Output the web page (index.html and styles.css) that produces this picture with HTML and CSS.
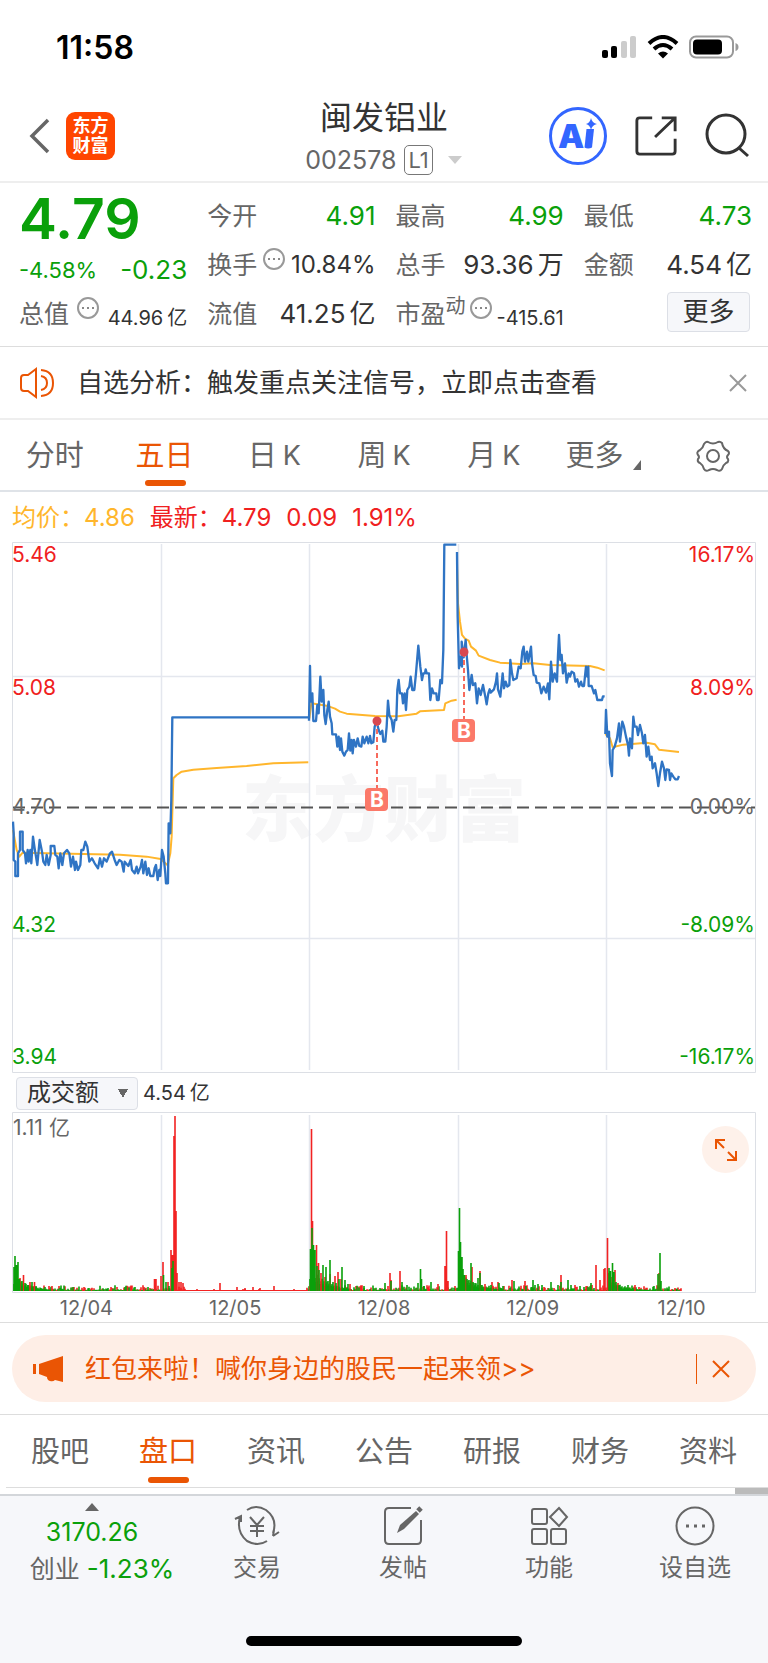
FILE: index.html
```html
<!DOCTYPE html>
<html lang="zh-CN">
<head>
<meta charset="utf-8">
<meta name="viewport" content="width=device-width, initial-scale=1">
<title>闽发铝业 002578</title>
<link rel="stylesheet" href="styles.css">
</head>
<body>
<div class="status">
  <span class="clock">11:58</span>
  <svg class="status-icons" width="138" height="26" viewBox="0 0 138 26" aria-hidden="true">
    <g fill="#000"><rect x="1" y="15" width="6" height="8" rx="2"/><rect x="10" y="11" width="6" height="12" rx="2"/></g>
    <g fill="#ccc"><rect x="20" y="6" width="6" height="17" rx="2"/><rect x="29" y="1" width="6" height="22" rx="2"/></g>
    <g fill="none" stroke="#000" stroke-width="4"><path d="M48 8.500Q62 -4.500 76 8.500"/><path d="M53 14Q62 6 71 14"/></g>
    <path d="M57 18.500Q62 14.500 67 18.500L62 23.500Z"/>
    <rect x="89" y="1.500" width="43" height="21" rx="6" fill="none" stroke="#999" stroke-width="2"/>
    <rect x="92" y="4.500" width="29" height="15" rx="4"/>
    <path d="M134.500 8v8q3-1 3-4t-3-4z" fill="#999"/>
  </svg>
</div>

<header class="header">
  <div class="header-side">
    <button class="icon-button" aria-label="返回"><svg width="22" height="38" viewBox="0 0 22 38"><path d="M20 3L4 19L20 35" fill="none" stroke="#666" stroke-width="3.500"/></svg></button>
    <div class="brand">东方<br>财富</div>
  </div>
  <div class="title">
    <h1>闽发铝业</h1>
    <div class="code"><span>002578</span><span class="level">L1</span><svg width="16" height="10" viewBox="0 0 16 10"><path d="M1 1h14L8 9z" fill="#ccc"/></svg></div>
  </div>
  <div class="header-side header-actions">
    <button class="icon-button" aria-label="Ai"><svg width="60" height="60" viewBox="0 0 60 60"><circle cx="30" cy="30" r="27.500" fill="none" stroke="#36f" stroke-width="3"/><text class="ai" x="10" y="42">A</text><path d="M38.500 23h7.500l-2 18.500q-4 2-7.500 0z" fill="#36f"/><path d="M43 12q1 5 6 6q-5 1-6 6q-1-5-5-6q4-1 5-6z" fill="#36f"/></svg></button>
    <button class="icon-button" aria-label="分享"><svg width="44" height="44" viewBox="0 0 46 46" fill="none" stroke="#333" stroke-width="3"><path d="M19 4H6Q3 4 3 7V39Q3 42 6 42H40Q43 42 43 39V26M29 4H43V18M43 4L22 24"/></svg></button>
    <button class="icon-button" aria-label="搜索"><svg width="46" height="46" viewBox="0 0 46 46" fill="none" stroke="#333" stroke-width="3"><circle cx="22" cy="21" r="19"/><path d="M35 35L44 43"/></svg></button>
  </div>
</header>

<section class="quote">
  <div class="cell lead"><strong class="price">4.79</strong></div>
  <div class="cell"><span class="label">今开</span><span class="value down">4.91</span></div>
  <div class="cell"><span class="label">最高</span><span class="value down">4.99</span></div>
  <div class="cell"><span class="label">最低</span><span class="value down">4.73</span></div>
  <div class="cell change"><span class="rate down">-4.58%</span><span class="value down">-0.23</span></div>
  <div class="cell"><span class="label">换手</span><svg class="info" viewBox="0 0 24 24"><use href="#more-dots"/></svg><span class="medium">10.84%</span></div>
  <div class="cell"><span class="label">总手</span><span class="value">93.36<i>万</i></span></div>
  <div class="cell"><span class="label">金额</span><span class="value">4.54<i>亿</i></span></div>
  <div class="cell"><span class="label">总值</span><svg class="info" viewBox="0 0 24 24"><use href="#more-dots"/></svg><span class="small">44.96<i>亿</i></span></div>
  <div class="cell"><span class="label">流值</span><span class="value">41.25<i>亿</i></span></div>
  <div class="cell"><span class="label">市盈<sup>动</sup></span><svg class="info" viewBox="0 0 24 24"><use href="#more-dots"/></svg><span class="small">-415.61</span></div>
  <div class="cell cell-end"><button class="more">更多</button></div>
</section>

<section class="notice">
  <svg width="36" height="32" viewBox="0 0 36 32" fill="none" stroke="#ea5504" stroke-width="2"><path d="M17 2L9 8H5Q2 8 2 11V21Q2 24 5 24H9L17 30Z"/><path d="M22 3Q34 4 34 16Q34 28 22 29M22 9Q28 10 28 16Q28 22 22 23"/></svg>
  <p>自选分析：触发重点关注信号，立即点击查看</p>
  <button class="icon-button" aria-label="关闭"><svg width="20" height="20" viewBox="0 0 20 20"><path d="M2 2L18 18M18 2L2 18" stroke="#999" stroke-width="2"/></svg></button>
</section>

<nav class="tabs period">
  <a href="#">分时</a><a href="#" class="active">五日</a><a href="#">日<span>K</span></a><a href="#">周<span>K</span></a><a href="#">月<span>K</span></a>
  <a href="#">更多<svg class="corner" width="8" height="10" viewBox="0 0 8 10"><path d="M8 0V10H0z" fill="#666"/></svg></a>
  <a href="#" aria-label="设置"><svg width="36" height="34" viewBox="0 0 36 34" fill="none" stroke="#666" stroke-width="2"><path d="M13 3Q18 6 23 3Q25 2 27 4Q28 10 33 12Q35 14 33 16Q31 18 33 20Q34 23 31 24Q28 26 27 30Q25 33 22 31Q18 29 14 31Q11 33 9 30Q8 26 5 24Q2 23 3 20Q5 18 3 16Q1 13 5 11Q8 9 9 5Q11 2 13 3Z"/><circle cx="18" cy="17" r="6"/></svg></a>
</nav>

<main class="market">
  <div class="legend"><span class="average">均价：4.86</span><span>最新：4.79</span><span>0.09</span><span>1.91%</span></div>

  <svg class="plot" viewBox="12 542 744 532" role="img" aria-label="五日价格走势">
    <text class="watermark" x="242" y="835">东方财富</text>
    <path d="M161.500 544V1070M309.500 544V1070M458.500 544V1070M606.500 544V1070M12 676.500H755M12 938.500H755" class="grid"/>
    <path d="M12.500 1072.500V542.500H755.500V1072.500Z" class="frame"/>
    <g class="line average-line">
      <path transform="translate(0 540) scale(.3333)" d="M39 870L50 930L58 950L68 938L140 940L250 942L360 944L440 950L482 957L503 976L511 940L515 890L520 715L530 705L545 695L580 689L650 684L740 678L820 670L925 667"/>
      <path transform="translate(300 530) scale(.3333)" d="M28 565L34 520L80 527L105 536L120 545L140 551L225 558L295 559L350 551L360 544L432 540L436 520L455 512L470 509"/>
      <path transform="translate(440 530) scale(.3333)" d="M51 100L54 220L60 275L66 315L75 326L86 332L93 350L108 362L116 377L150 390L180 398L240 402L280 400L330 405L450 408L472 413L494 421M496 612L510 625L518 652L550 644L620 638L645 643L657 659L717 666"/>
    </g>
    <path class="dash" d="M13 807.500H755"/>
    <g class="line price-line">
      <path transform="translate(0 540) scale(.3333)" d="M39 845L41 880V960L46 965V1008H54V940L60 930V875H68V930L75 940L78 970L83 930L86 965L91 930L94 970L99 890L104 925L108 950L112 975L119 900L126 935L130 965L136 975L140 945L146 975L152 945V918H163L166 945L172 950L176 985L181 940L187 975L192 940L201 930L208 940L213 980L219 950L225 990L228 965L234 990L241 975L244 930H250L256 905L262 920L268 965L276 955L284 970L294 985L300 955L306 980L312 955L320 965L330 940L336 935L344 960L350 975L358 960L365 965L371 995L374 965L385 978L392 960L396 990L404 1000L410 980L414 1000L422 980L426 960L430 1000L436 965L441 1005L446 985L451 1008H460L464 985L468 975L473 1020L478 990L481 1008L486 930L491 950L496 1000L498 1030H504L506 850L511 880L514 780L517 532H927"/>
      <path transform="translate(300 530) scale(.3333)" d="M27 572L30 408L32 515L37 490L40 573H48L52 525L56 550L61 440L65 515L70 480L73 555L77 582L82 540L86 515L90 560L95 580L97 613H102L108 613L112 650L116 620L120 660L123 625L127 665L133 677L138 665L143 660L147 610L151 662L155 630L158 670L162 630L168 650L173 625L178 648L184 650L188 620L193 640L200 620L205 640L210 618L214 640L220 637L224 590L230 575L236 600L241 612L247 602L250 635H256L260 590L264 512L268 555L275 570L280 605L284 570H289L292 480L296 450L300 490L306 490L309 520L314 490L318 540L322 480L328 470L332 440L337 480L343 480L348 430L355 347L361 410L366 450L370 430H375L377 418L380 430H387L391 510L396 475L401 490H409L411 510H416L421 450L426 460L430 360L433 44H469"/>
      <path transform="translate(440 530) scale(.3333)" d="M51 66L53 260L57 415L62 380L66 410L65 335L71 382L77 330L80 375L84 420L88 480L95 435L99 465L106 460L111 520L116 475L122 495L129 465L136 500L140 523L145 490L149 478L152 488L162 478L168 455L171 430L174 478L181 500L188 430L192 475L197 455L202 470L208 465L211 390L216 430L220 450L230 445L236 410L242 415L247 365L251 350L255 395L261 365L265 395L273 350L276 400L281 435L287 438L290 458L298 460L304 490L311 470L318 488L324 460L328 508L333 395L338 455L344 430L351 455L354 375L357 315L361 390L365 375L369 430L375 400L380 458L386 430L390 440L395 425L402 430L406 455L412 448L417 470L423 455L427 468H432L438 410L442 440L445 410L446 468H455L462 490L466 480L472 510H486L489 499H494M496 612L498 540L502 620L507 605L510 700L516 738L518 660L524 650L531 625L537 580L540 635L547 575L552 590L558 620L564 645L567 677L570 625L576 655L580 560L584 590H590L594 615L600 585L606 610L610 640L615 615L620 680L625 650L630 690L635 680L638 715L645 700L650 730L655 768L660 730L666 695L672 715L676 750L680 718L687 720L690 750L694 730L700 740L706 748L713 748L717 738"/>
    </g>
    <g class="marker">
      <path d="M377 721V788M464 652V719"/>
      <circle cx="377" cy="721" r="4.500"/><circle cx="464" cy="652" r="4.500"/>
      <rect x="365" y="788" width="23" height="23" rx="4"/><rect x="452" y="719" width="23" height="23" rx="4"/>
      <text x="377" y="807">B</text><text x="464" y="738">B</text>
    </g>
    <g class="axis">
      <text class="high" x="12" y="562">5.46</text><text class="high" x="12" y="695">5.08</text><text x="12" y="814">4.70</text><text class="low" x="12" y="932">4.32</text><text class="low" x="12" y="1064">3.94</text>
      <g class="axis-right"><text class="high" x="755" y="562">16.17%</text><text class="high" x="755" y="695">8.09%</text><text x="755" y="814">0.00%</text><text class="low" x="755" y="932">-8.09%</text><text class="low" x="755" y="1064">-16.17%</text></g>
    </g>
  </svg>

  <div class="volume-head">
    <select aria-label="指标"><option>成交额</option></select>
    <span>4.54<i>亿</i></span>
  </div>

  <div class="volume">
    <svg class="plot" viewBox="12 1112 744 182" role="img" aria-label="成交额">
      <path d="M161.500 1115V1290M309.500 1115V1290M458.500 1115V1290M606.500 1115V1290" class="grid"/>
      <path d="M12.500 1292.500V1112.500H755.500V1292.500Z" class="frame"/>
      <g id="bars"></g>
      <g class="axis"><text x="13" y="1135">1.11</text><text x="49" y="1135">亿</text></g>
    </svg>
    <button class="expand" aria-label="全屏"><svg width="24" height="24" viewBox="0 0 24 24" fill="none" stroke="#ea5504" stroke-width="2"><path d="M11 2H2V11M2 2L10 10M22 13V22H13M22 22L14 14"/></svg></button>
  </div>
  <div class="dates"><span>12/04</span><span>12/05</span><span>12/08</span><span>12/09</span><span>12/10</span></div>
</main>

<section class="promo">
  <a href="#" class="promo-card">
    <svg width="34" height="28" viewBox="0 0 34 28" fill="#ea5504"><path d="M1 9h3v10H1zM7 9L31 1V27L23 25Q21 27 18 26Q15 25 15 22L7 19Z"/></svg>
    <span>红包来啦！喊你身边的股民一起来领&gt;&gt;</span>
  </a>
  <button class="promo-close" aria-label="关闭"><svg width="20" height="20" viewBox="0 0 20 20"><path d="M2 2L18 18M18 2L2 18" stroke="#ea5504" stroke-width="2"/></svg></button>
</section>

<nav class="tabs sections">
  <a href="#">股吧</a><a href="#" class="active">盘口</a><a href="#">资讯</a><a href="#">公告</a><a href="#">研报</a><a href="#">财务</a><a href="#">资料</a>
</nav>
<div class="peek"><span></span></div>

<footer class="bottom">
  <nav class="dock">
    <a href="#" class="index">
      <svg width="14" height="8" viewBox="0 0 14 8"><path d="M7 0L14 8H0z" fill="#666"/></svg>
      <span class="down">3170.26</span>
      <span>创业 <b class="down">-1.23%</b></span>
    </a>
    <a href="#"><svg width="46" height="42" viewBox="0 0 46 42"><path d="M13 5Q22 -1 32 5Q44 14 39 28M39 31L40 25M39 31L45 27M33 36Q24 42 13 36Q2 27 6 12M1 14L7 11V17M16 12L23 20L30 12M23 20V32M16 21H30M16 26H30"/></svg>交易</a>
    <a href="#"><svg width="42" height="42" viewBox="0 0 42 42"><path d="M29 3H7Q3 3 3 7V35Q3 39 7 39H35Q39 39 39 35V15"/><path d="M15 28L18 20L34 6L37 9L22 24Z" fill="#666" stroke="none"/><path d="M36 6L39 3" stroke-width="5"/></svg>发帖</a>
    <a href="#"><svg width="42" height="42" viewBox="0 0 42 42"><rect x="4" y="4" width="15" height="15" rx="2"/><rect x="4" y="24" width="15" height="15" rx="2"/><rect x="23" y="24" width="15" height="15" rx="2"/><path d="M31 3L39 12L31 21L22 12Z"/></svg>功能</a>
    <a href="#"><svg width="42" height="42" viewBox="0 0 42 42"><circle cx="21" cy="21" r="18.500"/><path d="M12 21h3M20 21h3M28 21h3" stroke-width="3"/></svg>设自选</a>
  </nav>
  <div class="home"></div>
</footer>

<svg width="0" height="0" class="defs" aria-hidden="true"><symbol id="more-dots" viewBox="0 0 24 24"><circle cx="12" cy="12" r="10" fill="none" stroke="#999" stroke-width="2"/><path d="M6 12h2M11 12h2M16 12h2" stroke="#888" stroke-width="2"/></symbol></svg>
<script src="chart.js"></script>
</body>
</html>
```
FILE: styles.css
```css
* { box-sizing: border-box; }
body { margin: 0; background: #fff; color: #333; font-family: Inter, "Noto Sans CJK SC", sans-serif; font-size: 24px; line-height: 32px; }
a { color: inherit; text-decoration: none; }
i { font-style: normal; margin-left: 4px; }
button { font: inherit; color: inherit; }
svg { display: block; flex: none; }
.defs { position: absolute; }
.down { color: #0aa00a; }
.icon-button { display: block; padding: 0; border: 0; background: none; }

.status { display: flex; justify-content: space-between; align-items: center; height: 92px; padding: 4px 29px 0 56px; }
.clock { color: #000; font-size: 32px; font-weight: 600; }

.header { display: grid; grid-template-columns: 1fr auto 1fr; align-items: center; height: 91px; padding: 0 18px 2px 28px; border-bottom: 2px solid #eee; }
.header-side { display: flex; align-items: center; gap: 16px; }
.header-actions { justify-content: flex-end; gap: 26px; }
.brand { width: 49px; padding: 4px 0; border-radius: 9px; background: #ff4500; color: #fff; font-size: 18px; font-weight: 700; line-height: 20px; text-align: center; }
.title { padding: 4px 10px 0 0; text-align: center; }
h1 { margin: 0; font-size: 32px; font-weight: 400; line-height: 44px; }
.code { display: flex; align-items: center; justify-content: center; gap: 8px; height: 40px; color: #666; font-size: 25px; }
.code svg { margin-left: 6px; }
.level { padding: 0 3px; border: 1px solid #777; border-radius: 5px; font-size: 22px; line-height: 28px; }
.ai { fill: #36f; font-size: 33px; font-weight: 900; }

.quote { display: grid; grid-template-columns: repeat(4, 1fr); grid-auto-rows: 49px; column-gap: 20px; padding: 8px 16px 8px 19px; border-bottom: 1px solid #ddd; }
.cell { display: flex; justify-content: space-between; align-items: center; white-space: nowrap; }
.cell-end { justify-content: flex-end; padding: 0 2px 4px 0; }
.lead { padding-top: 6px; }
.change { padding-top: 10px; }
.label { color: #666; font-size: 25px; }
.label sup { font-size: 20px; line-height: 1px; vertical-align: 10px; }
.info { width: 24px; height: 24px; align-self: flex-start; margin-top: 7px; }
.price { color: #0aa00a; font-size: 57px; font-weight: 600; }
.value { font-size: 26px; }
.medium { font-size: 24px; }
.rate { font-size: 22px; }
.small { padding-top: 8px; font-size: 20px; }
.more { width: 83px; height: 40px; padding: 0; border: 1px solid #dcdfe6; border-radius: 4px; background: #f6f7fa; font-size: 26px; line-height: 36px; }

.notice { display: flex; align-items: center; gap: 22px; height: 73px; padding: 0 20px 0 19px; border-bottom: 2px solid #eee; font-size: 26px; }
.notice p { flex: 1; margin: 0; }

.tabs { display: grid; grid-template-columns: repeat(7, 1fr); height: 72px; color: #666; font-size: 29px; }
.tabs a { position: relative; display: flex; align-items: center; justify-content: center; padding-top: 2px; }
.tabs span { margin-left: 6px; font-size: 27px; }
.tabs .active { color: #ea5504; }
.active::after { content: ""; position: absolute; bottom: 4px; left: calc(50% - 20px); width: 41px; height: 6px; border-radius: 3px; background: #ea5504; }
.period { border-bottom: 2px solid #dfe3e8; }
.corner { align-self: flex-end; margin: 0 0 20px 10px; }

.market { padding: 0 12px; }
.legend { display: flex; gap: 15px; height: 50px; align-items: center; padding-top: 2px; color: #f02020; font-size: 24px; }
.average { color: #ffb62c; }
.plot { width: 100%; height: auto; }
.watermark { fill: #f6f6f7; font: 900 71px "Noto Sans CJK SC", sans-serif; }
.grid { fill: none; stroke: #e4e7ee; stroke-width: 1.500; }
.frame { fill: none; stroke: #dcdfe5; }
.line { fill: none; stroke-width: 7; stroke-linejoin: round; }
.average-line { stroke: #ffb62c; stroke-width: 6; }
.price-line { stroke: #2f74c4; }
.dash { stroke: #555; stroke-width: 2; stroke-dasharray: 12 6; }
.marker path { stroke: #f76a5c; stroke-width: 2; stroke-dasharray: 5 3; }
.marker circle { fill: #d84850; }
.marker rect { fill: #fb7969; }
.marker text { fill: #fff; font-size: 21px; font-weight: 700; text-anchor: middle; }
.axis { fill: #666; font-size: 21px; }
.axis-right { text-anchor: end; }
.high { fill: #f02020; }
.low { fill: #0aa00a; }

.volume-head { display: flex; align-items: center; gap: 5px; height: 38px; padding: 0 4px; font-size: 20px; }
.volume-head select { width: 122px; height: 33px; padding: 0 10px; appearance: none; border: 1px solid #dcdfe6; border-radius: 4px; background: conic-gradient(from -27deg at 50% 100%, #666 54deg, #0000 0) 102px 11px / 10px 9px no-repeat, #f6f7fa; background: linear-gradient(to bottom left, #f6f7fa 50%, #0000 50%) 102px 11px / 5px 9px no-repeat, linear-gradient(to bottom right, #f6f7fa 50%, #0000 50%) 107px 11px / 5px 9px no-repeat, #f6f7fa; color: #333; font: 24px/30px Inter, "Noto Sans CJK SC", sans-serif; }
.volume-head select { background: linear-gradient(to top right, #0000 50%, #666 50%) 101px 11px / 5px 9px no-repeat, linear-gradient(to top left, #0000 50%, #666 50%) 106px 11px / 5px 9px no-repeat, #f6f7fa; }
.volume { position: relative; }
.expand { position: absolute; top: 14px; right: 7px; display: grid; place-items: center; width: 47px; height: 47px; padding: 0; border: 0; border-radius: 50%; background: #fef1ea; }
.red { fill: none; stroke: #f22222; stroke-width: 1.600; }
.green { fill: none; stroke: #0aa00a; stroke-width: 1.600; }
.dates { display: grid; grid-template-columns: repeat(5, 1fr); height: 28px; color: #666; font-size: 20px; line-height: 28px; text-align: center; }

.promo { position: relative; display: flex; align-items: center; padding: 12px; border-top: 1px solid #ddd; border-bottom: 1px solid #ddd; color: #ea5504; font-size: 26px; }
.promo-card { display: flex; flex: 1; align-items: center; gap: 19px; height: 67px; padding: 0 60px 0 20px; border-radius: 34px; background: #feeee6; }
.promo-close { position: absolute; right: 24px; display: grid; place-items: center; width: 48px; height: 30px; padding: 0; border: 0; border-left: 1px solid #ea5504; background: none; }

.sections { padding: 0 6px; }
.peek { display: flex; justify-content: flex-end; height: 7px; margin-left: 6px; border-top: 1px solid #ddd; }
.peek span { width: 33px; background: #bbb; }

.bottom { padding-bottom: 17px; border-top: 2px solid #d3d6da; background: #f6f7fa; color: #666; }
.dock { display: grid; grid-template-columns: 184fr 146fr 146fr 146fr 146fr; height: 140px; }
.dock a { display: flex; flex-direction: column; align-items: center; gap: 5px; padding-top: 9px; }
.dock a > svg { fill: none; stroke: #666; stroke-width: 2; }
.dock .index { padding: 7px 0 0 20px; }
.dock .index > svg { margin-right: 20px; }
.dock .index > .down { padding-right: 20px; }
.dock .index { font-size: 25px; }
.dock .index > svg { stroke: none; }
.dock b { font-weight: 400; font-size: 26px; }
.home { width: 36%; height: 10px; margin: 0 auto; border-radius: 5px; background: #000; }
```
FILE: chart.js
```js
// Turnover bars: x position and height in chart units, listed by trend colour.
const red = [
  [20,13],[23.500,16],[30,9],[34.500,9],[52,5],[111,4],[144,4],[154.500,12],[156,12],[161,15],[163,29],[168,9],
  [171,41],[172.500,36],[174,155],[175,175],[176,80],[177,18],[179,9],[181,9],[183,8],
  [220,8],[237,4],[245,3],[253,4],[260,3],[274,5],[310,5],[311.500,162],[312.500,70],[316.500,46],[318.500,28],
  [321,18],[325,14],[330,17],[335,15],[338,19],[341,12],[350,7],[390,18],[391,11],[400,20],[438,7],[445,25],[446.500,60],[448,10],
  [466,16],[472,24],[480,20],[485,7],[492,9],[498,9],[512,11],[525,10],[561,16],[576,4],[596,26],[600,11],[604,22],[605,23],
  [607.500,53],[608.500,18],[612,14],[615,21],[618,8],[635,6],[659,18],[675,3]
];
const green = [
  [14,24],[15,35],[16.500,26],[18,29],[19.500,12],[22,10],[25,8],[28,6],[32,9],[36,5],[45,4],[73,4],[125,4],[135,4],[148,4],
  [163.500,16],[166,9],[169,5],[172,23],[173,30],[310.500,42],[312,63],[313.500,46],[315,41],[317,25],[319,21],[323,26],[326,24],
  [328,10],[330,31],[333,9],[336,8],[339,12],[342,24],[345,11],[348,7],[364,5],[385,8],[391,10],[402,9],[407,6],[418,8],[420.500,22],
  [421.500,12],[424,5],[431,9],[458.500,40],[459.500,83],[460.500,49],[462,34],[463,22],[464.500,16],[467,12],[469,11],[471,28],
  [473,9],[475,8],[478,13],[480,18],[482,6],[491,6],[499,8],[503,5],[514,10],[526,5],[533,11],[538,7],[542,6],[551,9],[561,9],
  [568,11],[580,5],[591,8],[609,23],[610.500,20],[612.500,28],[614,19],[616,9],[619,6],[628,6],[658,17],[660,38],[661,10]
];
const path = (cls, d) => {
  const node = document.createElementNS("http://www.w3.org/2000/svg", "path");
  node.setAttribute("class", cls);
  node.setAttribute("d", d);
  document.getElementById("bars").append(node);
};
const bars = list => list.map(([x, h]) => `M${x} 1291V${1291 - h}`).join("");
const quiet = { red: [], green: [] };
for (let x = 14, n = 0; x < 682; x += 1, n += 1) {
  const noise = Math.abs(Math.sin(n * 12.9898) * 43.7) % 1;
  const h = x > 185 && x < 307 ? 1 + (noise > .93) : 1 + noise * noise * 5;
  const hue = Math.abs(Math.sin(n * 78.233) * 95.1) % 1;
  quiet[(hue > .5 || (x > 176 && x < 309)) ? "red" : "green"].push([x, h]);
}
// Turnover decays after each open.
for (const [start, peak] of [[14, 14], [310, 24], [459, 20], [608, 12]]) {
  for (let k = 0; k < 42; k += 1) quiet.green.push([start + k, peak * Math.exp(-k / 18) * (.5 + (k * 7 % 5) / 8)]);
}
path("red", bars(quiet.red));
path("green", bars(quiet.green));
path("red", bars(red));
path("green", bars(green));
```
